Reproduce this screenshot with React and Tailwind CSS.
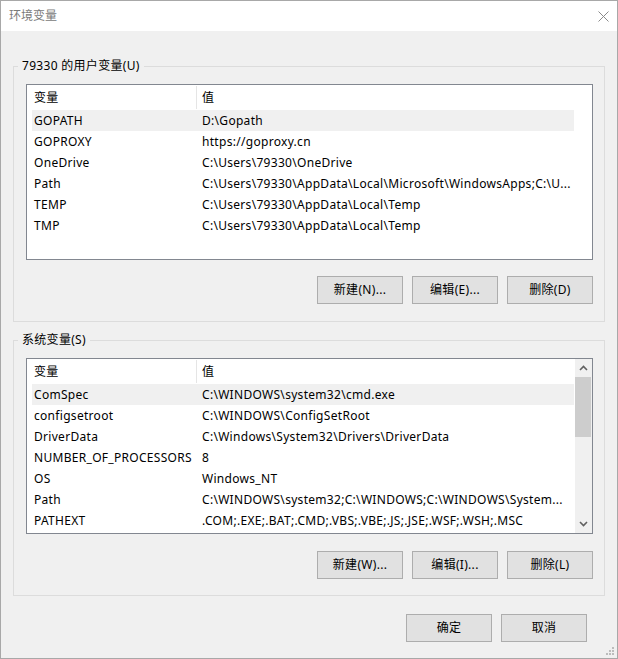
import React from 'react'

const userVars = [
  ['GOPATH', 'D:\\Gopath'],
  ['GOPROXY', 'https://goproxy.cn'],
  ['OneDrive', 'C:\\Users\\79330\\OneDrive'],
  ['Path', 'C:\\Users\\79330\\AppData\\Local\\Microsoft\\WindowsApps;C:\\U...'],
  ['TEMP', 'C:\\Users\\79330\\AppData\\Local\\Temp'],
  ['TMP', 'C:\\Users\\79330\\AppData\\Local\\Temp'],
]

const sysVars = [
  ['ComSpec', 'C:\\WINDOWS\\system32\\cmd.exe'],
  ['configsetroot', 'C:\\WINDOWS\\ConfigSetRoot'],
  ['DriverData', 'C:\\Windows\\System32\\Drivers\\DriverData'],
  ['NUMBER_OF_PROCESSORS', '8'],
  ['OS', 'Windows_NT'],
  ['Path', 'C:\\WINDOWS\\system32;C:\\WINDOWS;C:\\WINDOWS\\System...'],
  ['PATHEXT', '.COM;.EXE;.BAT;.CMD;.VBS;.VBE;.JS;.JSE;.WSF;.WSH;.MSC'],
]

function Btn({ children, className = '' }) {
  return (
    <button className={`w-[86px] h-[28px] border border-[#adadad] bg-[#e1e1e1] text-black text-[12px] leading-none ${className}`}>
      {children}
    </button>
  )
}

function Chevron({ up }) {
  return (
    <svg width="9" height="6" viewBox="0 0 9 6">
      <path d={up ? 'M1 5 L4.5 1.5 L8 5' : 'M1 1 L4.5 4.5 L8 1'} fill="none" stroke="#606060" strokeWidth="1.6" />
    </svg>
  )
}

function ListBox({ rows, scroll }) {
  return (
    <div className="ml-[12px] w-[567px] h-[176px] border border-[#828790] bg-white flex overflow-hidden">
      <div className="flex-1 pl-[5px]">
        {/* header */}
        <div className="flex h-[25px] w-[542px]">
          <div className="w-[164px] pl-[2px] flex items-center">变量</div>
          <div className="w-px my-[1px] bg-[#e5e5e5]" />
          <div className="flex-1 pl-[5px] flex items-center">值</div>
        </div>
        {rows.map(([k, v], i) => (
          <div key={k + i} className={`flex h-[21px] w-[542px] items-center whitespace-nowrap ${i === 0 ? 'bg-[#f0f0f0]' : ''}`}>
            <div className="w-[165px] pl-[2px] overflow-hidden">{k}</div>
            <div className="flex-1 pl-[5px] overflow-hidden">{v}</div>
          </div>
        ))}
      </div>
      {scroll && (
        <div className="w-[17px] bg-[#f0f0f0] flex flex-col">
          <div className="h-[18px] flex items-center justify-center"><Chevron up /></div>
          <div className="h-[60px] mr-[1px] bg-[#cdcdcd]" />
          <div className="flex-1" />
          <div className="h-[18px] flex items-center justify-center"><Chevron /></div>
        </div>
      )}
    </div>
  )
}

function Group({ title, children, className = '' }) {
  return (
    <fieldset className={`border border-[#dcdcdc] pb-[17px] ${className}`}>
      <legend className="ml-[4px] px-[4px] leading-[16px]">{title}</legend>
      {children}
    </fieldset>
  )
}

export default function App() {
  return (
    <div
      className="relative w-[618px] h-[659px] border border-[#a8a8a8] bg-[#f0f0f0] flex flex-col text-[12px] tracking-[0.3px] text-black"
      style={{ fontFamily: '"Noto Sans", "Noto Sans CJK SC", sans-serif' }}
    >
      {/* title bar */}
      <div className="h-[30px] bg-white flex items-center justify-between pl-[8px] pr-[8px]">
        <span className="text-[#7a7a7a] tracking-normal">环境变量</span>
        <svg width="11" height="11" viewBox="0 0 11 11">
          <path d="M0.5 0.5 L10.5 10.5 M10.5 0.5 L0.5 10.5" stroke="#8a8a8a" strokeWidth="1" />
        </svg>
      </div>

      <div className="px-[12px] pt-[27px]">
        <Group title="79330 的用户变量(U)">
          <div className="mt-[10px]">
            <ListBox rows={userVars} />
          </div>
          <div className="flex justify-end gap-[9px] mt-[16px] mr-[11px]">
            <Btn>新建(N)...</Btn>
            <Btn>编辑(E)...</Btn>
            <Btn>删除(D)</Btn>
          </div>
        </Group>

        <Group title="系统变量(S)" className="mt-[10px] !pb-[16px]">
          <div className="mt-[10px]">
            <ListBox rows={sysVars} scroll />
          </div>
          <div className="flex justify-end gap-[9px] mt-[17px] mr-[11px]">
            <Btn>新建(W)...</Btn>
            <Btn>编辑(I)...</Btn>
            <Btn>删除(L)</Btn>
          </div>
        </Group>

        <div className="flex justify-end gap-[9px] mt-[18px] mr-[18px]">
          <Btn>确定</Btn>
          <Btn>取消</Btn>
        </div>
      </div>

      {/* size grip */}
      <svg className="absolute right-[2px] bottom-[2px]" width="10" height="10" viewBox="0 0 10 10">
        <rect x="7" y="1" width="2" height="2" fill="#bcbcbc" />
        <rect x="4" y="4" width="2" height="2" fill="#bcbcbc" />
        <rect x="7" y="4" width="2" height="2" fill="#bcbcbc" />
        <rect x="1" y="7" width="2" height="2" fill="#bcbcbc" />
        <rect x="4" y="7" width="2" height="2" fill="#bcbcbc" />
        <rect x="7" y="7" width="2" height="2" fill="#bcbcbc" />
      </svg>
    </div>
  )
}
